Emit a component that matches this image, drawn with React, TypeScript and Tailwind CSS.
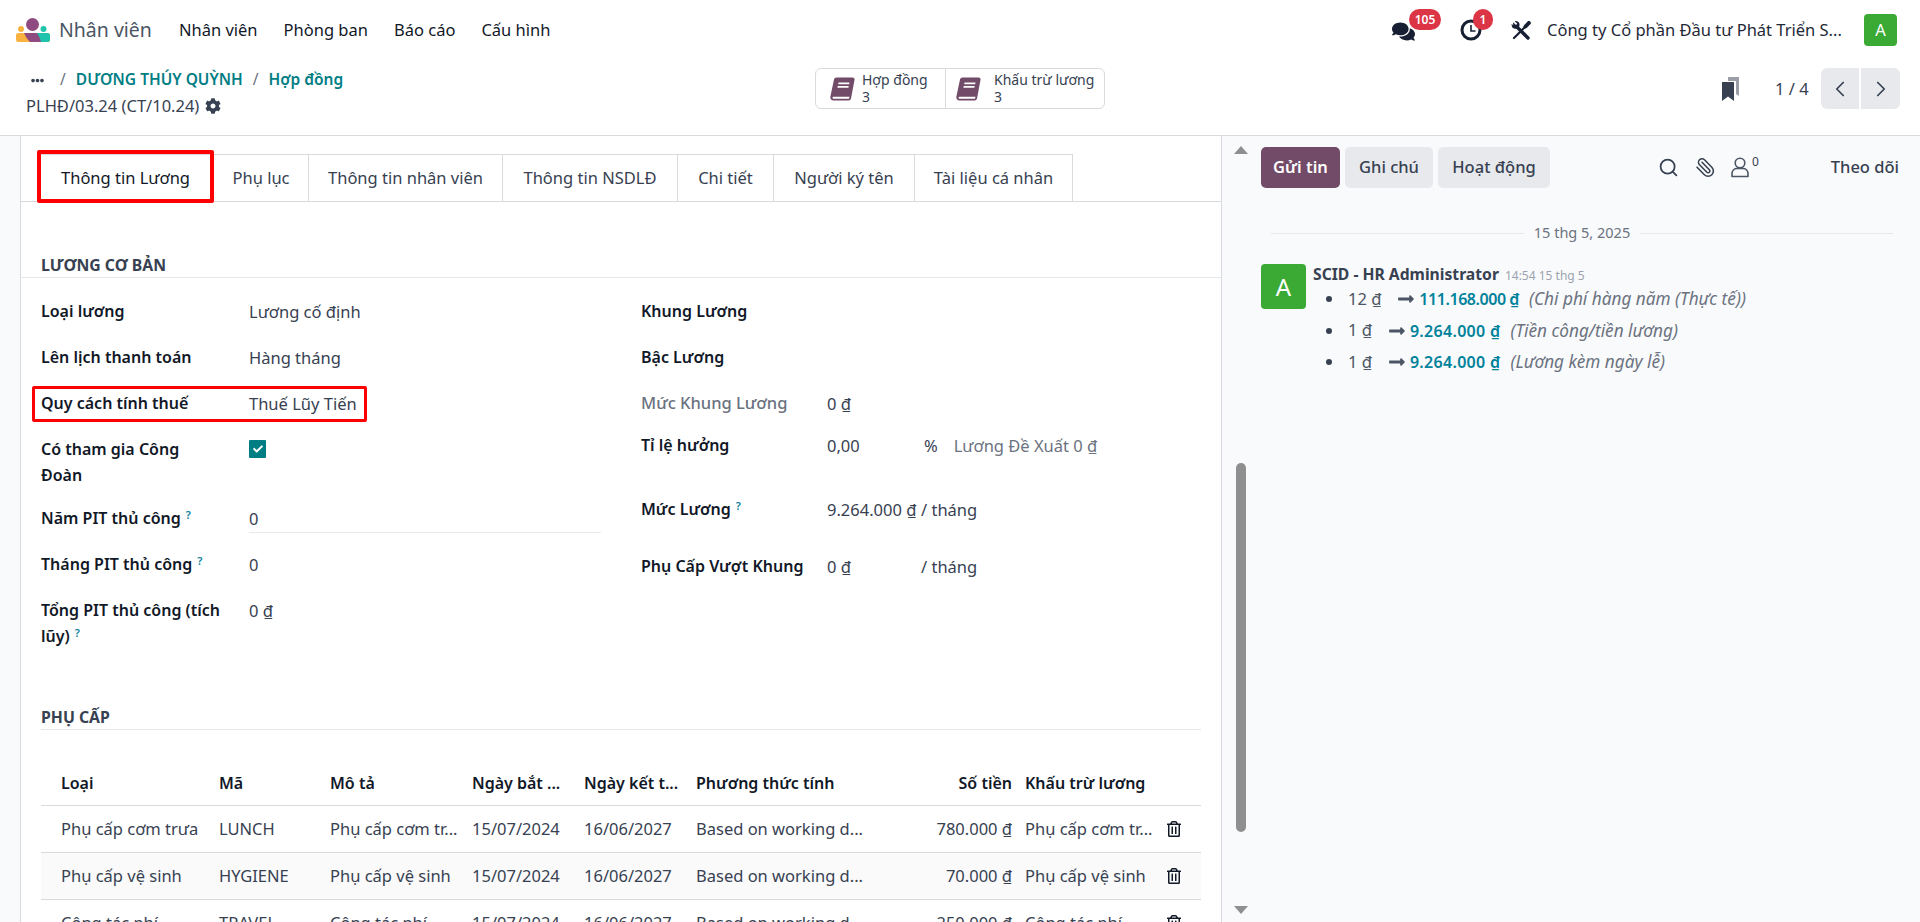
import React from "react";
import { FaComments, FaCog, FaCheck, FaEllipsisH, FaRegTrashAlt, FaLongArrowAltRight } from "react-icons/fa";
import { ChevronLeft, ChevronRight, Search, Paperclip } from "lucide-react";

function Logo() {
  return (
    <svg width="34" height="24" viewBox="0 0 34 24">
      <circle cx="5" cy="11" r="3" fill="#f9b13f" />
      <circle cx="27.500" cy="11" r="3" fill="#1fc4ad" />
      <rect x="0" y="15" width="34" height="9" rx="2.500" fill="#f9b13f" />
      <path d="M20 15H31.500a2.500 2.500 0 0 1 2.500 2.500V21.500a2.500 2.500 0 0 1-2.500 2.500H20z" fill="#1fc4ad" />
      <path d="M8 15H21c2 3 3 5.500 4 9H14C11.500 21.500 9.500 18.500 8 15z" fill="#8f4a7f" />
      <circle cx="16.500" cy="6.500" r="6.500" fill="#8f4a7f" />
    </svg>
  );
}

function BookIcon() {
  return (
    <svg width="25" height="24" viewBox="0 0 25 24">
      <path d="M6.500 0.500H22.500a2 2 0 0 1 2 2.400L21 21.500a2.500 2.500 0 0 1-2.500 2H3.500A3.200 3.200 0 0 1 0.300 20L4 2.500A2.500 2.500 0 0 1 6.500 0.500z" fill="#714b67" />
      <path d="M3.500 19.800H19.500L19 21.800H3.500a1 1 0 0 1 0-2z" fill="#ffffff" />
      <path d="M8.500 5.500H19.500L19.200 7.200H8.200zM7.700 9H18.700L18.400 10.700H7.400z" fill="#ffffff" />
    </svg>
  );
}

function Bookmarks() {
  return (
    <svg width="17" height="24" viewBox="0 0 17 24">
      <path d="M6 0H17V19L14 17V4H6z" fill="#9a9ea6" />
      <path d="M0 5H12V24L6 19.500L0 24z" fill="#374151" />
    </svg>
  );
}

function ClockIcon() {
  return (
    <svg width="22" height="22" viewBox="0 0 22 22" fill="none" className="mt-[1px]">
      <circle cx="11" cy="11" r="9" stroke="#162032" strokeWidth="3" />
      <path d="M11 6V12H15.500" stroke="#162032" strokeWidth="1.600" />
    </svg>
  );
}

function ToolsIcon() {
  return (
    <svg width="21" height="19" viewBox="0 0 21 19" fill="none">
      <path d="M15.500 4.500L3 17" stroke="#162032" strokeWidth="2.200" strokeLinecap="round" />
      <path d="M14.500 5.500L17.800 2" stroke="#162032" strokeWidth="4" strokeLinecap="round" />
      <path d="M6 6L17 17" stroke="#162032" strokeWidth="3.400" strokeLinecap="round" />
      <path d="M2.200 1.200L5 4 L6.300 2.800 L3.800 0.200C6.500 -0.300 9 1.500 8.500 4.500C8.200 6.800 5.500 8.500 3 7.500C1 6.800 0.300 4.500 0.800 2.800L2.200 4.500z" fill="#162032" />
    </svg>
  );
}

function UserIcon() {
  return (
    <svg width="18" height="21" viewBox="0 0 18 21" fill="none" stroke="#4b5563" strokeWidth="1.600" className="ml-[15px]">
      <circle cx="9" cy="6" r="4.800" />
      <path d="M1 19.500V16a5 5 0 0 1 5-4.500h6a5 5 0 0 1 5 4.500V19.500z" strokeLinejoin="round" />
    </svg>
  );
}

function Tri({ up }: { up?: boolean }) {
  return (
    <svg width="14" height="8" viewBox="0 0 14 8" className="-ml-[2px]">
      <path d={up ? "M7 0L14 8H0z" : "M0 0H14L7 8z"} fill="#8f8f8f" />
    </svg>
  );
}

function Help() {
  return <sup className="text-[#0e80a0] font-semibold text-[11px] ml-[5px]">?</sup>;
}

const tabs = [
  { t: "Thông tin Lương", w: "w-[176px]", active: true },
  { t: "Phụ lục", w: "w-[95px]" },
  { t: "Thông tin nhân viên", w: "w-[194px]" },
  { t: "Thông tin NSDLĐ", w: "w-[175px]" },
  { t: "Chi tiết", w: "w-[96px]" },
  { t: "Người ký tên", w: "w-[141px]" },
  { t: "Tài liệu cá nhân", w: "w-[158px]" },
];

function Row({ label, h, children }: { label: React.ReactNode; h: string; children?: React.ReactNode }) {
  return (
    <div className={`flex ${h}`}>
      <div className="w-[208px] shrink-0 pr-2 font-semibold text-[16px] text-[#111827] leading-[26px]">{label}</div>
      <div className="flex-1 pt-[1px] leading-[26px] text-[#374151]">{children}</div>
    </div>
  );
}

function RightRow({ label, h, children, muted }: { label: React.ReactNode; h: string; children?: React.ReactNode; muted?: boolean }) {
  return (
    <div className={`flex ${h}`}>
      <div className={`w-[186px] shrink-0 leading-[26px] ${muted ? "font-medium text-[16.500px] text-[#6b7280]" : "font-semibold text-[16px] text-[#111827]"}`}>{label}</div>
      <div className="flex-1 pt-[1px] leading-[26px] text-[#374151] flex">{children}</div>
    </div>
  );
}

const cols = "grid grid-cols-[170px_111px_142px_112px_112px_182px_147px_142px_42px]";
const rows = [
  ["Phụ cấp cơm trưa", "LUNCH", "Phụ cấp cơm tr...", "780.000 ₫", "Phụ cấp cơm tr...", ""],
  ["Phụ cấp vệ sinh", "HYGIENE", "Phụ cấp vệ sinh", "70.000 ₫", "Phụ cấp vệ sinh", "bg-[#fafafb]"],
  ["Công tác phí", "TRAVEL", "Công tác phí", "250.000 ₫", "Công tác phí", ""],
];

function Change({ from, to, note, track }: { from: string; to: string; note: string; track: string }) {
  return (
    <li className="flex items-center h-[26px] mb-[5.500px] relative pl-[22px]">
      <span className="absolute left-0 top-[10px] w-[6px] h-[6px] rounded-full bg-[#374151]" />
      <span className="text-[#4b5563]">{from}</span>
      <FaLongArrowAltRight className="text-[#4b5563] ml-4 mr-[4px] text-[18px]" />
      <span className={`font-semibold text-[16px] text-[#00829b] ${track}`}>{to}</span>
      <span className="italic text-[17.200px] text-[#6b7280] ml-[10px]">{note}</span>
    </li>
  );
}

export default function App() {
  return (
    <div className="w-[1920px] h-[922px] overflow-hidden flex flex-col bg-white text-[#374151] text-[16.500px] font-['Noto_Sans',sans-serif]">
      <header className="h-[60px] shrink-0 flex items-center pl-[16px] pr-[23px]">
        <Logo />
        <span className="ml-[9px] text-[19.500px] text-[#4b5563]">Nhân viên</span>
        <nav className="flex items-center ml-[27px] gap-[26px] text-[#111827]">
          <span>Nhân viên</span>
          <span>Phòng ban</span>
          <span>Báo cáo</span>
          <span>Cấu hình</span>
        </nav>
        <div className="ml-auto flex items-center">
          <div className="relative w-[68px] h-[24px]">
            <FaComments className="text-[#162032] text-[23px] mt-[2px]" />
            <span className="absolute left-[17px] -top-[9px] h-[21px] w-[32px] rounded-full bg-[#dc3545] text-white text-[12px] font-semibold flex items-center justify-center">105</span>
          </div>
          <div className="relative w-[51px] h-[24px]">
            <ClockIcon />
            <span className="absolute left-[13px] -top-[9px] h-[21px] w-[20px] rounded-full bg-[#dc3545] text-white text-[12px] font-semibold flex items-center justify-center">1</span>
          </div>
          <ToolsIcon />
          <span className="ml-[15px] w-[296px] truncate text-[#1f2937]">Công ty Cổ phần Đầu tư Phát Triển S...</span>
          <span className="ml-[21px] w-[33px] h-[32px] rounded-[4px] bg-[#3aaa35] text-white flex items-center justify-center">A</span>
        </div>
      </header>

      <div className="h-[76px] shrink-0 border-b border-[#d8dadd] flex pl-[26px] pr-[20px] relative">
        <div className="w-[789px] pt-[8px]">
          <div className="flex items-center h-[24px] font-semibold text-[15.500px] text-[#017e84]">
            <FaEllipsisH className="ml-[5px] text-[#374151] text-[13px]" />
            <span className="ml-[16px] mr-[10px] text-[#6b7280] font-normal">/</span>
            <span>DƯƠNG THÚY QUỲNH</span>
            <span className="mx-[10px] text-[#6b7280] font-normal">/</span>
            <span>Hợp đồng</span>
          </div>
          <div className="flex items-center h-[26px] mt-[1px] text-[#374151]">
            <span>PLHĐ/03.24 (CT/10.24)</span>
            <FaCog className="ml-[6px] text-[16px]" />
          </div>
        </div>
        <div className="mt-[8px] h-[41px] w-[290px] flex border border-[#d8dadd] rounded-[6px] text-[14px] leading-[17px] text-[#374151]">
          <div className="w-[130px] border-r border-[#d8dadd] flex items-center pl-[14px]">
            <BookIcon />
            <div className="ml-[7px] -mt-[1px]">Hợp đồng<br />3</div>
          </div>
          <div className="flex-1 flex items-center pl-[10px]">
            <BookIcon />
            <div className="ml-[13px] -mt-[1px]">Khấu trừ lương<br />3</div>
          </div>
        </div>
        <div className="ml-auto flex items-center h-[41px] mt-[8px]">
          <Bookmarks />
          <span className="ml-[36px] w-[46px] mt-[1px]">1 / 4</span>
          <div className="w-[38px] h-[41px] rounded-l-[6px] bg-[#e7e9ed] flex items-center justify-center"><ChevronLeft size={26} strokeWidth={1.600} /></div>
          <div className="ml-[2px] w-[39px] h-[41px] rounded-r-[6px] bg-[#e7e9ed] flex items-center justify-center"><ChevronRight size={26} strokeWidth={1.600} /></div>
        </div>
      </div>

      <main className="flex-1 flex min-h-0">
        <div className="w-[21px] shrink-0 bg-[#f9fafb] border-r border-[#d8dadd]" />
        <section className="w-[1200px] shrink-0 bg-white pt-[18px] overflow-hidden">
          <div className="h-[48px] border-b border-[#d8dadd] flex pl-[17px]">
            {tabs.map((t) => (
              <div key={t.t} className={`${t.w} h-[47px] shrink-0 relative flex items-center justify-center border-t border-r border-[#d8dadd] ${t.active ? "text-[#111827]" : "text-[#374151]"}`}>
                {t.t}
                {t.active && <span className="absolute -left-[1px] -top-[5px] w-[177px] h-[53px] border-[4px] border-[#ff0000] rounded-[2px]" />}
              </div>
            ))}
          </div>

          <div className="mt-[50px] h-[26px] border-b border-[#e5e7eb] pl-[20px] font-bold text-[15.800px] leading-[26px] uppercase">Lương cơ bản</div>

          <div className="flex px-[20px] pt-[20px]">
            <div className="w-[560px] shrink-0">
              <Row label="Loại lương" h="h-[46px]">Lương cố định</Row>
              <Row label="Lên lịch thanh toán" h="h-[46px]">Hàng tháng</Row>
              <div className="relative">
                <Row label="Quy cách tính thuế" h="h-[46px]">Thuế Lũy Tiến</Row>
                <span className="absolute -left-[9px] -top-[4px] w-[335px] h-[36px] border-[3px] border-[#ff0000] rounded-[2px]" />
              </div>
              <Row label={<>Có tham gia Công<br />Đoàn</>} h="h-[69px]">
                <span className="mt-[3px] w-[17px] h-[18px] rounded-[1px] bg-[#017e84] text-white flex items-center justify-center"><FaCheck className="text-[10px]" /></span>
              </Row>
              <Row label={<>Năm PIT thủ công<Help /></>} h="h-[46px]">
                <div className="w-[352px] h-[27px] border-b border-[#e7e9ed]">0</div>
              </Row>
              <Row label={<>Tháng PIT thủ công<Help /></>} h="h-[46px]">0</Row>
              <Row label={<>Tổng PIT thủ công (tích lũy)<Help /></>} h="h-[107px]">0 ₫</Row>
            </div>
            <div className="flex-1 pl-[40px]">
              <RightRow label="Khung Lương" h="h-[46px]" />
              <RightRow label="Bậc Lương" h="h-[46px]" />
              <RightRow label="Mức Khung Lương" h="h-[42px]" muted>0 ₫</RightRow>
              <RightRow label="Tỉ lệ hưởng" h="h-[64px]">
                <span className="w-[97px]">0,00</span>
                <span>%</span>
                <span className="ml-[16px] text-[#6b7280]">Lương Đề Xuất 0 ₫</span>
              </RightRow>
              <RightRow label={<>Mức Lương<Help /></>} h="h-[57px]">
                <span className="w-[94px]">9.264.000 ₫</span>
                <span>/ tháng</span>
              </RightRow>
              <RightRow label="Phụ Cấp Vượt Khung" h="h-[50px]">
                <span className="w-[94px]">0 ₫</span>
                <span>/ tháng</span>
              </RightRow>
            </div>
          </div>

          <div className="mx-[20px] h-[26px] border-b border-[#e5e7eb] font-bold text-[15.800px] leading-[26px] uppercase">Phụ cấp</div>

          <div className="mx-[20px] mt-[31px]">
            <div className={`${cols} h-[45px] items-center border-b border-[#d8dadd] font-semibold text-[16px] text-[#111827]`}>
              <span className="pl-[20px]">Loại</span>
              <span className="pl-[8px]">Mã</span>
              <span className="pl-[8px]">Mô tả</span>
              <span className="pl-[8px]">Ngày bắt ...</span>
              <span className="pl-[8px]">Ngày kết t...</span>
              <span className="pl-[8px]">Phương thức tính</span>
              <span className="pr-[5px] text-right">Số tiền</span>
              <span className="pl-[8px]">Khấu trừ lương</span>
              <span />
            </div>
            {rows.map((r) => (
              <div key={r[1]} className={`${cols} h-[47px] items-center border-b border-[#d8dadd] ${r[5]}`}>
                <span className="pl-[20px]">{r[0]}</span>
                <span className="pl-[8px]">{r[1]}</span>
                <span className="pl-[8px] truncate">{r[2]}</span>
                <span className="pl-[8px]">15/07/2024</span>
                <span className="pl-[8px]">16/06/2027</span>
                <span className="pl-[8px]">Based on working d...</span>
                <span className="pr-[5px] text-right">{r[3]}</span>
                <span className="pl-[8px] truncate">{r[4]}</span>
                <span className="pl-[7px]"><FaRegTrashAlt className="text-[16px] text-[#111827]" /></span>
              </div>
            ))}
          </div>
        </section>

        <aside className="flex-1 flex border-l border-[#d8dadd] bg-[#f9fafb] min-w-0">
          <div className="w-[39px] shrink-0 pl-[14px] pt-[10px] flex flex-col">
            <Tri up />
            <div className="w-[10px] h-[369px] mt-[309px] rounded-[5px] bg-[#8f8f8f]" />
            <div className="mt-[74px]"><Tri /></div>
          </div>
          <div className="flex-1 pt-[11px] pr-[20px]">
            <div className="flex items-center h-[41px]">
              <span className="w-[79px] h-[41px] rounded-[5px] bg-[#714b67] text-white font-semibold flex items-center justify-center">Gửi tin</span>
              <span className="ml-[5px] w-[88px] h-[41px] rounded-[5px] bg-[#e7e9ed] font-medium flex items-center justify-center">Ghi chú</span>
              <span className="ml-[5px] w-[112px] h-[41px] rounded-[5px] bg-[#e7e9ed] font-medium flex items-center justify-center">Hoạt động</span>
              <Search size={21} strokeWidth={2} className="ml-[108px]" />
              <Paperclip size={21} strokeWidth={1.800} className="ml-[16px] -scale-x-100" />
              <UserIcon />
              <sup className="ml-[3px] text-[12px]">0</sup>
              <span className="ml-auto font-medium pr-[1px]">Theo dõi</span>
            </div>
            <div className="flex items-center mt-[33px] h-[24px] pl-[10px] pr-[7px] text-[14.500px] text-[#6b7280]">
              <div className="flex-1 h-px bg-[#e5e7eb]" />
              <span className="mx-[10px]">15 thg 5, 2025</span>
              <div className="flex-1 h-px bg-[#e5e7eb]" />
            </div>
            <div className="flex mt-[19px]">
              <span className="w-[45px] h-[45px] rounded-[4px] bg-[#3aaa35] text-white text-[24px] flex items-center justify-center">A</span>
              <div className="ml-[7px]">
                <div className="flex items-baseline leading-[20px]">
                  <span className="font-bold text-[15.700px] text-[#374151]">SCID - HR Administrator</span>
                  <span className="ml-[6px] text-[12px] text-[#9ca3af]">14:54 15 thg 5</span>
                </div>
                <ul className="ml-[13px]">
                  <Change from="12 ₫" to="111.168.000 ₫" note="(Chi phí hàng năm (Thực tế))" track="tracking-[-0.450px]" />
                  <Change from="1 ₫" to="9.264.000 ₫" note="(Tiền công/tiền lương)" track="tracking-[0.300px]" />
                  <Change from="1 ₫" to="9.264.000 ₫" note="(Lương kèm ngày lễ)" track="tracking-[0.300px]" />
                </ul>
              </div>
            </div>
          </div>
        </aside>
      </main>
    </div>
  );
}
